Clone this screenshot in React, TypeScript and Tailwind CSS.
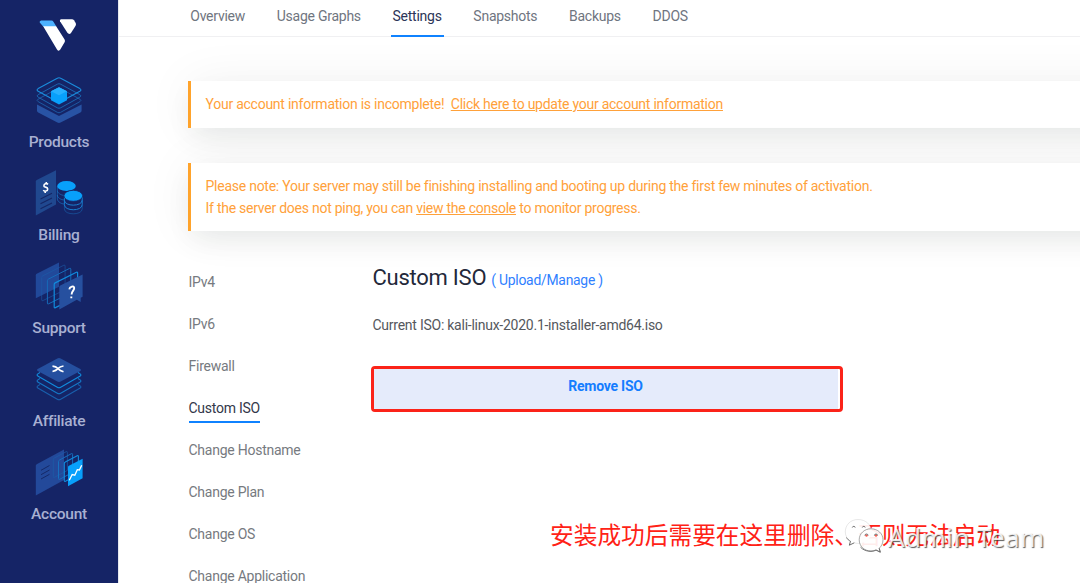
import React from 'react';

const INK = '#1a7fd0';

function Logo() {
  return (
    <svg viewBox="38 17 40 36" className="-ml-[2px] h-9 w-10" fill="#fff">
      <path d="M43 26H56L64.6 39.6Q65.4 41 64.6 42.3L60.3 49.6Q58.7 51.8 57 49.4Z" />
      <path d="M41.2 20.6H51.4Q52.8 20.6 53.6 22L56.2 26.2H43L39.7 22.6Q39.2 20.9 41.2 20.6Z" fill="#4db2ff" />
      <path d="M61 19.2H72Q73.3 19.2 74 20.3L75.7 23Q76.4 24.4 75.6 25.7L71 32.9Q69.2 35 67.4 32.8L60 21.2Q59.3 19.5 61 19.2Z" />
    </svg>
  );
}

function ProductsIcon() {
  const diamond = 'M57.3 78.2Q59 77.2 60.7 78.2L79.8 88.6Q82 89.9 79.8 91.2L60.7 101.8Q59 102.7 57.3 101.8L38.2 91.2Q36 89.9 38.2 88.6Z';
  return (
    <svg viewBox="35 76 48 48" className="size-12" fill="none">
      <path d="M37 104.5L59 116L81.6 104.5V110.5Q81.6 111.8 80.4 112.5L60.6 122.5Q59 123.3 57.4 122.5L38.2 112.5Q37 111.8 37 110.5Z" fill="#2853a4" />
      <path d={diamond} transform="translate(0 10.5)" stroke="#1d62ac" strokeWidth="1" opacity="0.85" />
      <path d={diamond} transform="translate(0 6)" stroke="#1b6fba" strokeWidth="1" opacity="0.85" />
      <path d={diamond} stroke="#1a8cdc" strokeWidth="1.1" />
      <path d="M59 87.3L67 91.2V100.2L59 104.5L51 100.2V91.2Z" fill="#08a0fb" />
      <path d="M59 87.3L67 91.2L59 95.2L51 91.2Z" fill="#27b0ff" />
    </svg>
  );
}

function BillingIcon() {
  return (
    <svg viewBox="35 169 48 48" className="size-12" fill="none">
      <path d="M35.8 181.6Q35.8 180.6 36.7 180.1L56 170.3V204.6L35.8 215.6Z" fill="#20488f" />
      <path d="M40.5 199L52 193.3M40.5 203.8L52 198.1M40.5 208.7L52 203" stroke="#142665" strokeWidth="1.1" />
      <path d="M48 184.4C46.6 182.9 43.9 183.8 43.9 185.9C43.9 187.8 47.7 186.4 47.7 188.9C47.7 191.2 44.5 192 43.3 190.1M46.3 182V183.8M45.2 191.2V193" stroke="#fff" strokeWidth="1.6" />
      <g stroke={INK} strokeWidth="1">
        <path d="M57.3 186V190.5C57.3 193 61 195.2 64 195.4M57.3 190.5V195C57.3 197.7 61 199.8 64 200M57.3 195V199C57.5 201.5 61 203.8 64 204" opacity="0.6" />
        <path d="M64.4 196V200.2C64.4 206.8 82.2 206.8 82.2 200.2V196M64.4 200.2V204.8C64.4 211.4 82.2 211.4 82.2 204.8V200.2" />
        <path d="M64.4 204.8V209C64.4 215.4 82.2 215.4 82.2 209V204.8" opacity="0.4" />
      </g>
      <ellipse cx="66.5" cy="186" rx="9.3" ry="5.1" fill="#08a0fb" />
      <ellipse cx="73.3" cy="195.8" rx="9.4" ry="5.5" fill="#08a0fb" stroke="#152466" strokeWidth="0.8" />
    </svg>
  );
}

function SupportIcon() {
  const panel = 'M54.2 284.5Q54.2 283.4 55.2 282.9L76.4 272.2Q77.6 271.7 77.6 273V296.7L55.4 307.6Q54.2 308.2 54.2 306.9Z';
  return (
    <svg viewBox="35 262 48 48" className="size-12" fill="none">
      <path d="M35.8 275.2Q35.8 274.3 36.7 273.8L59 262.6V286.8L35.8 298.3Z" fill="#21499a" />
      <path d={panel} transform="translate(-12.5 -7)" stroke="#1b5ca9" strokeWidth="0.9" opacity="0.65" />
      <path d={panel} transform="translate(-6.8 -3.8)" stroke="#176bb9" strokeWidth="1" />
      <path d={panel} stroke="#118bdd" strokeWidth="1.2" />
      <path d="M59.3 286.9Q59.3 285.9 60.2 285.4L82.6 274.4V296.8L80.7 297.8V302L76.8 299.7L59.3 309.4Z" fill="#26509f" />
      <path d="M69.3 289.4C69.5 286.8 74.2 285.1 74.2 288.1C74.2 290.8 71.6 291.2 71.6 294.4M71.3 296.4V298.3" stroke="#fff" strokeWidth="1.9" />
    </svg>
  );
}

function AffiliateIcon() {
  const layer = 'M40 371.5L38.2 372.6Q36 373.9 38.2 375.2L57.3 386.3Q59 387.3 60.7 386.3L79.8 375.2Q82 373.9 79.8 372.6L78 371.5';
  return (
    <svg viewBox="35 355 48 48" className="size-12" fill="none">
      <path d="M57.3 358.5Q59 357.6 60.7 358.5L80.3 369Q82 370 80.3 371L60.7 381.5Q59 382.4 57.3 381.5L37.7 371Q36 370 37.7 369Z" fill="#254f9f" />
      <path d={layer} transform="translate(0 1)" stroke="#118bdd" strokeWidth="1.1" />
      <path d={layer} transform="translate(0 7)" stroke="#1577c6" strokeWidth="1.1" />
      <path d={layer} transform="translate(0 13)" stroke="#195fac" strokeWidth="1.1" />
      <path d="M52.5 366.2Q56 366.5 58 368.6T63.5 371.8M63.5 366Q60 366.5 58 368.6T52.5 371.5" stroke="#fff" strokeWidth="1.7" />
    </svg>
  );
}

function AccountIcon() {
  const panel = 'M64.3 463.5Q64.3 462.5 65.3 462L77.2 455.7Q78.4 455.2 78.4 456.5V474.4L65.5 481.3Q64.3 481.8 64.3 480.6Z';
  return (
    <svg viewBox="35 448 48 48" className="size-12" fill="none">
      <path d="M35.8 465.8Q35.8 464.8 36.7 464.3L64 449.6V480L35.8 495.4Z" fill="#23499a" />
      <path d="M41 470.3L49.5 465.5M41 474.7L49.5 470M41 479L49.5 474.3" stroke="#152968" strokeWidth="1" />
      <path d={panel} transform="translate(-11 -4)" stroke="#1b5ca9" strokeWidth="1" opacity="0.7" />
      <path d={panel} transform="translate(-5.8 -2)" stroke="#176fbf" strokeWidth="1" />
      <path d={panel} stroke="#118bdd" strokeWidth="1.1" />
      <path d="M68 467.2Q68 466.3 68.9 465.8L82.6 458.7V478.3L68 486.3Z" fill="#08a0fb" />
      <path d="M69.3 480.2L72.2 474.5L74.8 475.2L77.3 469.7L79.4 470L81.7 465.2" stroke="#fff" strokeWidth="1.3" />
    </svg>
  );
}

const sections = [
  { label: 'Products', Icon: ProductsIcon },
  { label: 'Billing', Icon: BillingIcon },
  { label: 'Support', Icon: SupportIcon },
  { label: 'Affiliate', Icon: AffiliateIcon },
  { label: 'Account', Icon: AccountIcon },
];

const tabs = ['Overview', 'Usage Graphs', 'Settings', 'Snapshots', 'Backups', 'DDOS'];

const settings = ['IPv4', 'IPv6', 'Firewall', 'Custom ISO', 'Change Hostname', 'Change Plan', 'Change OS', 'Change Application'];

function Alert({ children }: { children: React.ReactNode }) {
  return (
    <div className="-mr-16 border-l-[3px] border-[#ffa32b] bg-white pt-[13px] pb-[12px] pl-[14.5px] leading-[21.5px] text-[#ffa13a] shadow-[0_0_50px_rgba(0,0,0,0.06),0_12px_28px_-4px_rgba(20,40,35,0.07)]">
      {children}
    </div>
  );
}

function Watermark() {
  return (
    <div className="absolute top-[518px] left-[844px] flex items-start">
      <svg viewBox="844 518 44 36" className="h-9 w-11 shrink-0">
        <g fill="#fff" fillOpacity="0.92" stroke="#777" strokeWidth="0.5">
          <path d="M858 519.5C850.5 519.5 845.3 525 845.3 531.8C845.3 536 847.4 539.2 850.5 541.3L849.3 545.2L854.3 542.8C855.5 543.2 857 543.4 858.5 543.4C866 543.4 871.5 538 871.5 531.5C871.5 524.7 865.5 519.5 858 519.5Z" strokeOpacity="0.35" />
          <path d="M871 528.8C864.4 528.8 859.2 533.5 859.2 539.8C859.2 546.2 864.4 551 871 551C872.7 551 874.4 550.6 876 550L880.3 552.2L879.2 548.2C881.5 546.2 883 543.2 883 539.8C883 533.5 877.7 528.8 871 528.8Z" stroke="#555" />
        </g>
        <path d="M860.5 547.2C865 552 873 552.2 876 550L880.3 552.2L879.2 548.2M846.5 537.5C847.4 539.2 849 540.6 850.5 541.3L849.3 545.2L854.3 542.8" fill="none" stroke="#555" strokeWidth="0.8" />
        <g fill="none" stroke="#444" strokeWidth="0.8">
          <path d="M852.3 527.5A1.5 1.5 0 0 1 855.2 527.5M862.3 527.5A1.5 1.5 0 0 1 865.2 527.5" />
        </g>
        <circle cx="866.5" cy="535.6" r="1.2" fill="#fb5a50" />
        <circle cx="876" cy="535.6" r="1.2" fill="#fb5a50" />
        <path d="M864.9 535.6A1.6 1.6 0 0 1 868.1 535.6M874.4 535.6A1.6 1.6 0 0 1 877.6 535.6" fill="none" stroke="#444" strokeWidth="0.7" />
      </svg>
      <span className="font-['Noto_Sans',sans-serif] text-[26px] leading-[38px] font-normal tracking-[0.4px] whitespace-nowrap text-white/85 [text-shadow:1px_1px_1px_rgba(50,50,50,0.8)]">
        Admin Team
      </span>
    </div>
  );
}

export default function App() {
  return (
    <div className="relative flex h-[583px] w-[1080px] overflow-hidden bg-white font-['Roboto',sans-serif] text-[14px] tracking-[-0.25px]">
      <aside className="flex w-[118px] shrink-0 flex-col items-center bg-[#152466] pt-[17px]">
        <Logo />
        <nav className="mt-[23px] flex flex-col">
          {sections.map(({ label, Icon }) => (
            <a key={label} className="flex h-[93.1px] flex-col items-center">
              <Icon />
              <span className="mt-[7.5px] text-[15.5px] leading-5 font-medium text-[#a8b0d2]">{label}</span>
            </a>
          ))}
        </nav>
      </aside>

      <main className="flex min-w-0 flex-1 flex-col overflow-hidden border-l border-[#e6e8ef]">
        <header className="z-10 flex h-[37px] shrink-0 gap-[27.7px] border-b border-[#f0f0f2] bg-white pl-[69.3px] leading-8">
          {tabs.map((tab) => (
            <a
              key={tab}
              className={
                tab === 'Settings'
                  ? 'h-[37px] border-b-2 border-[#0f82ff] px-[2px] whitespace-nowrap text-[#2c3558]'
                  : 'px-[2px] whitespace-nowrap text-[#6f7580]'
              }
            >
              {tab}
            </a>
          ))}
        </header>

        <section className="flex flex-col gap-[35.7px] pt-11 pl-[69px]">
          <Alert>
            Your account information is incomplete!&nbsp; <a className="underline">Click here to update your account information</a>
          </Alert>
          <Alert>
            <p>Please note: Your server may still be finishing installing and booting up during the first few minutes of activation.</p>
            <p>
              If the server does not ping, you can <a className="underline">view the console</a> to monitor progress.
            </p>
          </Alert>
        </section>

        <section className="flex pt-[35px] pl-[69.5px]">
          <ul className="flex w-[184px] shrink-0 flex-col pt-px leading-[30px] text-[#767a80]">
            {settings.map((item) => (
              <li key={item} className="flex h-[42px] shrink-0 items-start whitespace-nowrap">
                <span className={item === 'Custom ISO' ? 'h-[29.5px] border-b-2 border-[#0f82ff] text-[#33384a]' : ''}>{item}</span>
              </li>
            ))}
          </ul>

          <div className="w-[480px]">
            <h1 className="flex items-baseline text-[22px] leading-6 whitespace-nowrap text-[#23283a]">
              Custom ISO
              <a className="ml-[5px] text-[13.9px] text-[#2f80ff]">( Upload/Manage )</a>
            </h1>
            <p className="mt-[23px] leading-5 text-[#55585d]">Current ISO: kali-linux-2020.1-installer-amd64.iso</p>
            <div className="mt-[31px] -ml-[2px] h-[46px] w-[472px] rounded-[4px] border-[3px] border-[#fb2319] bg-white pr-[2px]">
              <button className="flex h-full w-full items-start justify-center bg-[#e5ebfb] pt-[7px] leading-5 font-bold text-[#147dff]">
                Remove ISO
              </button>
            </div>
          </div>
        </section>
      </main>

      <p className="absolute top-[517px] left-[550px] font-['Noto_Sans_CJK_SC',sans-serif] text-[23.7px] leading-[34px] tracking-normal whitespace-nowrap text-[#ff2216]">
        安装成功后需要在这里删除、否则无法启动
      </p>
      <Watermark />
    </div>
  );
}
